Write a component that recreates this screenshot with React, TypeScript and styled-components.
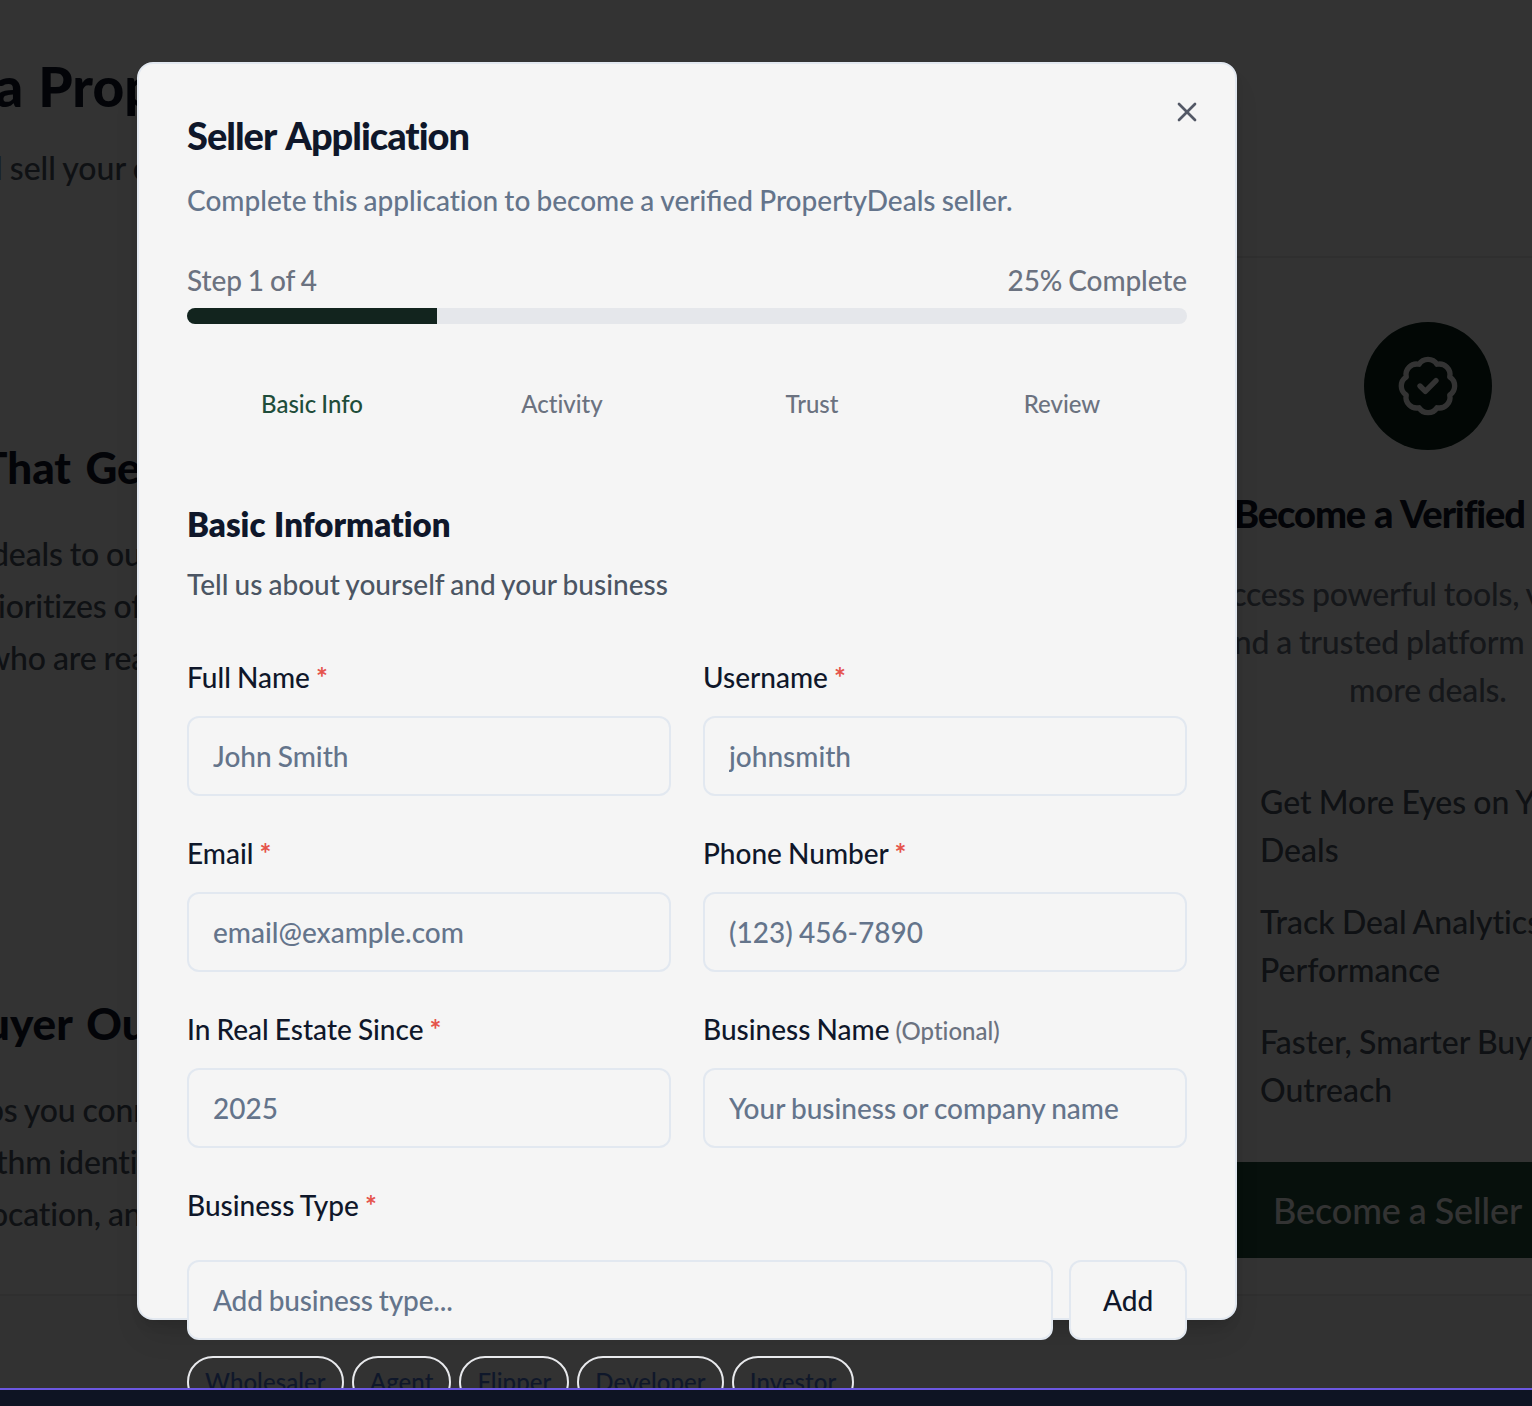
import React from "react";
import styled, { createGlobalStyle } from "styled-components";
import { BadgeCheck, X } from "lucide-react";

const GlobalStyle = createGlobalStyle`
  *, *::before, *::after { box-sizing: border-box; }
  body {
    margin: 0;
    background: #fafafa;
    font-family: Lato, "Open Sans", sans-serif;
    font-weight: 500;
    font-variant-ligatures: no-common-ligatures;
    word-spacing: -0.06em;
    -webkit-font-smoothing: antialiased;
  }
  h1, h2, h3, p, ul { margin: 0; padding: 0; }
  ul { list-style: none; }
  input, button { font-variant-ligatures: inherit; word-spacing: inherit; }
`;

const Shell = styled.div`
  width: 100%;
  height: 1406px;
  overflow: hidden;
  display: flex;
  flex-direction: column;
`;
const Viewport = styled.div`
  position: relative;
  height: 1388px;
  flex: none;
  overflow: hidden;
`;
const Dock = styled.div`
  flex: 1;
  background: #0e1423;
  border-top: 2px solid #6b57e0;
`;

/* Page behind the dialog */
const Section = styled.section`
  height: 1296px;
  background: #fcfcfc;
  border-bottom: 2px solid #ebebeb;
  display: flex;
  white-space: nowrap;
`;
const Content = styled.div`
  width: 1236px;
  flex: none;
`;
const Hero = styled.header`
  height: 258px;
  padding-top: 54px;
`;
const Line = styled.span<{ $x: number }>`
  display: block;
  margin-left: ${(p) => p.$x}px;
`;
const HeroTitle = styled.h1`
  font-size: 55px;
  line-height: 64px;
  font-weight: 900;
  word-spacing: 2px;
  color: #0f172a;
`;
const HeroText = styled.p`
  margin-top: 26px;
  font-size: 32px;
  line-height: 48px;
  color: #4b5563;
`;
const Features = styled.div`
  padding-top: 182px;
`;
const Feature = styled.article`
  height: 556px;
`;
const FeatureTitle = styled.h2`
  font-size: 44px;
  line-height: 54px;
  font-weight: 900;
  word-spacing: 4px;
  color: #0f172a;
`;
const FeatureText = styled.p`
  margin-top: 34px;
  font-size: 32px;
  line-height: 52px;
  letter-spacing: -0.15px;
  color: #4b5563;
`;
const Promo = styled.aside`
  width: 384px;
  flex: none;
  margin-top: 256px;
  border-top: 2px solid #ebebeb;
  background: #fff;
  display: flex;
  flex-direction: column;
  padding-top: 64px;
`;
const Seal = styled.div`
  width: 128px;
  height: 128px;
  border-radius: 50%;
  align-self: center;
  background: #0a2319;
  color: #fff;
  display: grid;
  place-items: center;
`;
const PromoTitle = styled.h2`
  margin-top: 39px;
  font-size: 38px;
  line-height: 48px;
  font-weight: 900;
  letter-spacing: -1.1px;
  word-spacing: 1px;
  color: #0f172a;
`;
const PromoText = styled.p`
  margin-top: 33px;
  font-size: 32px;
  line-height: 48px;
  letter-spacing: -0.2px;
  color: #6b7280;
`;
const Perks = styled.ul`
  margin: 64px 0 0 24px;
  display: flex;
  flex-direction: column;
  gap: 24px;
  font-size: 32px;
  line-height: 48px;
  color: #4b5563;
`;
const PromoButton = styled.div`
  margin-top: 48px;
  height: 96px;
  background: #23503c;
  color: #fff;
  font-size: 36px;
  line-height: 97px;
  letter-spacing: -0.1px;
  padding-left: 37px;
`;

/* Dialog */
const Overlay = styled.div`
  position: absolute;
  inset: 0;
  background: rgba(0, 0, 0, 0.8);
  padding: 62px 0 0 137px;
`;
const Dialog = styled.div`
  position: relative;
  width: 1100px;
  height: 1258px;
  padding: 48px;
  border: 2px solid #e2e8f0;
  border-radius: 16px;
  background: #f5f5f5;
  color: #0f172a;
  box-shadow: 0 20px 30px -6px rgba(0, 0, 0, 0.1), 0 8px 12px -4px rgba(0, 0, 0, 0.1);
`;
const Close = styled.button`
  position: absolute;
  top: 32px;
  right: 32px;
  padding: 0;
  border: 0;
  background: none;
  color: #0f172a;
  opacity: 0.7;
  svg { display: block; }
`;
const Title = styled.h2`
  font-size: 38px;
  line-height: 46px;
  font-weight: 900;
  letter-spacing: -1px;
  word-spacing: 3px;
`;
const Description = styled.p`
  margin-top: 22px;
  font-size: 28px;
  line-height: 40px;
  color: #64748b;
`;
const Ligature = styled.span`
  font-variant-ligatures: common-ligatures;
`;
const ProgressHead = styled.div`
  margin-top: 40px;
  display: flex;
  justify-content: space-between;
  font-size: 28px;
  line-height: 40px;
  letter-spacing: -0.1px;
  color: #6b7280;
`;
const Track = styled.div`
  margin-top: 8px;
  height: 16px;
  border-radius: 8px;
  background: #e5e7eb;
  overflow: hidden;
`;
const Fill = styled.div`
  height: 100%;
  background: #12241e;
`;
const Steps = styled.div`
  margin-top: 64px;
  display: grid;
  grid-template-columns: repeat(4, 1fr);
  text-align: center;
`;
const Step = styled.span<{ $active: boolean }>`
  font-size: 24px;
  line-height: 32px;
  color: ${(p) => (p.$active ? "#1f4d3a" : "#6b7280")};
`;
const GroupTitle = styled.h3`
  margin-top: 83px;
  font-size: 33px;
  line-height: 42px;
  font-weight: 800;
  word-spacing: 1px;
`;
const GroupText = styled.p`
  margin-top: 19px;
  font-size: 28px;
  line-height: 40px;
  color: #4b5563;
`;
const Fields = styled.div`
  margin-top: 53px;
  display: grid;
  grid-template-columns: 1fr 1fr;
  gap: 37px 32px;
`;
const Label = styled.label`
  display: block;
  height: 40px;
  font-size: 28px;
  line-height: 40px;
`;
const Star = styled.span`
  font-weight: 700;
  color: #e5534b;
`;
const Optional = styled.span`
  font-size: 24px;
  color: #6b7280;
`;
const Input = styled.input`
  display: block;
  width: 100%;
  min-width: 0;
  height: 80px;
  padding: 0 24px;
  border: 2px solid #e2e8f0;
  border-radius: 12px;
  background: #f5f5f5;
  font-family: inherit;
  font-size: 28px;
  font-weight: 500;
  &::placeholder { color: #64748b; opacity: 1; }
`;
const Field = styled.div`
  display: flex;
  flex-direction: column;
  gap: 19px;
`;
const TypeField = styled.div`
  margin-top: 37px;
`;
const AddRow = styled.div`
  margin-top: 35px;
  display: flex;
  gap: 16px;
  letter-spacing: -0.15px;
  ${Input} { letter-spacing: inherit; }
`;
const AddButton = styled.button`
  flex: none;
  width: 118px;
  height: 80px;
  padding: 0;
  border: 2px solid #e2e8f0;
  border-radius: 12px;
  background: #f5f5f5;
  color: #0f172a;
  font-family: inherit;
  font-size: 28px;
  font-weight: 500;
`;
const Chips = styled.div`
  margin-top: 16px;
  display: flex;
  gap: 8px;
`;
const Chip = styled.span`
  height: 52px;
  padding: 0 16px;
  border: 2px solid #e8e9ec;
  border-radius: 26px;
  font-size: 24px;
  line-height: 48px;
  letter-spacing: 0.07px;
`;

const fields = [
  { label: "Full Name", placeholder: "John Smith" },
  { label: "Username", placeholder: "johnsmith" },
  { label: "Email", placeholder: "email@example.com" },
  { label: "Phone Number", placeholder: "(123) 456-7890" },
  { label: "In Real Estate Since", placeholder: "2025" },
  { label: "Business Name", placeholder: "Your business or company name", optional: true },
];
const steps = ["Basic Info", "Activity", "Trust", "Review"];
const types = ["Wholesaler", "Agent", "Flipper", "Developer", "Investor"];
const progress = 25;

export default function App() {
  return (
    <Shell>
      <GlobalStyle />
      <Viewport>
        <Section>
          <Content>
            <Hero>
              <HeroTitle><Line $x={-5}>a Prop</Line></HeroTitle>
              <HeroText><Line $x={-5}>l sell your c</Line></HeroText>
            </Hero>
            <Features>
              <Feature>
                <FeatureTitle><Line $x={-19}>That Ge</Line></FeatureTitle>
                <FeatureText>
                  <Line $x={-9}>deals to our</Line>
                  <Line $x={-2}>ioritizes off</Line>
                  <Line $x={-15}>who are rea</Line>
                </FeatureText>
              </Feature>
              <Feature>
                <FeatureTitle><Line $x={-15}>uyer Ou</Line></FeatureTitle>
                <FeatureText>
                  <Line $x={-14}>ps you conn</Line>
                  <Line $x={-4}>thm identif</Line>
                  <Line $x={-10}>ocation, an</Line>
                </FeatureText>
              </Feature>
            </Features>
          </Content>
          <Promo>
            <Seal><BadgeCheck size={64} strokeWidth={2} /></Seal>
            <PromoTitle><Line $x={-2}>Become a Verified</Line></PromoTitle>
            <PromoText>
              <Line $x={-26}>Access powerful tools, v</Line>
              <Line $x={-18}>and a trusted platform t</Line>
              <Line $x={113}>more deals.</Line>
            </PromoText>
            <Perks>
              <li>Get More Eyes on Y<br />Deals</li>
              <li>Track Deal Analytics<br />Performance</li>
              <li>Faster, Smarter Buy<br />Outreach</li>
            </Perks>
            <PromoButton>Become a Seller</PromoButton>
          </Promo>
        </Section>
        <Overlay>
          <Dialog role="dialog">
            <Title>Seller Application</Title>
            <Description>
              Complete this application to become a <Ligature>verified</Ligature> PropertyDeals seller.
            </Description>
            <ProgressHead>
              <span>Step 1 of 4</span>
              <span>{progress}% Complete</span>
            </ProgressHead>
            <Track><Fill style={{ width: `${progress}%` }} /></Track>
            <Steps>
              {steps.map((s, i) => <Step key={s} $active={i === 0}>{s}</Step>)}
            </Steps>
            <GroupTitle>Basic Information</GroupTitle>
            <GroupText>Tell us about yourself and your business</GroupText>
            <Fields>
              {fields.map((f) => (
                <Field key={f.label}>
                  <Label>{f.label} {f.optional ? <Optional>(Optional)</Optional> : <Star>*</Star>}</Label>
                  <Input placeholder={f.placeholder} />
                </Field>
              ))}
            </Fields>
            <TypeField>
              <Label>Business Type <Star>*</Star></Label>
              <AddRow>
                <Input placeholder="Add business type..." />
                <AddButton>Add</AddButton>
              </AddRow>
              <Chips>{types.map((t) => <Chip key={t}>{t}</Chip>)}</Chips>
            </TypeField>
            <Close aria-label="Close"><X size={32} strokeWidth={2} /></Close>
          </Dialog>
        </Overlay>
      </Viewport>
      <Dock />
    </Shell>
  );
}
